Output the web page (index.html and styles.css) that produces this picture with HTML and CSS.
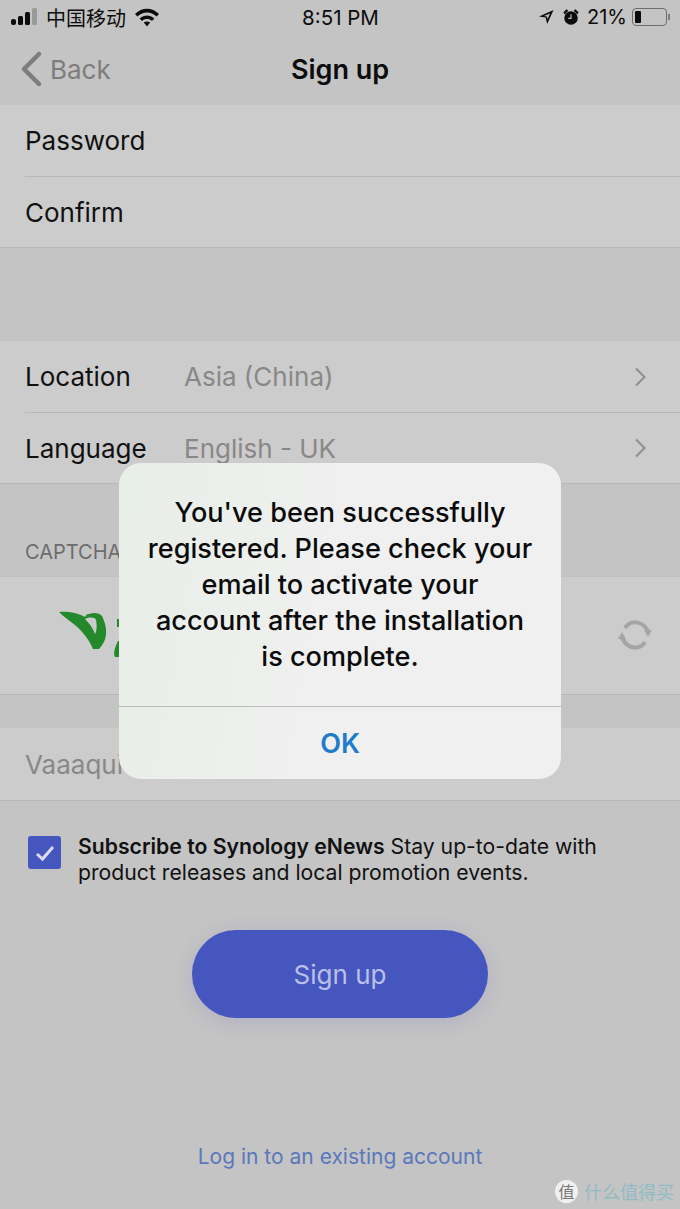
FILE: index.html
```html
<!DOCTYPE html>
<html>

<head>
    <title>Sign up</title>
    <link rel="stylesheet" href="styles.css">
</head>

<body>
    <div class="statusbar">
        <div class="status-left">
            <svg class="signal" width="28" height="20" viewBox="0 0 28 20">
                <rect x="0" y="12" width="5" height="6" rx="2" fill="#0c0c0c"/>
                <rect x="7" y="9" width="5" height="9" rx="1.5" fill="#0c0c0c"/>
                <rect x="14" y="5" width="5" height="13" rx="1.5" fill="#0c0c0c"/>
                <rect x="21" y="1" width="5" height="17" rx="1.5" fill="#9a9a9a"/>
            </svg>
            <span class="carrier">中国移动</span>
            <svg class="wifi" width="26" height="20" viewBox="0 0 26 20">
                <path d="M1 7 C8 0 18 0 25 7 L22.6 9.6 C16.6 4.2 9.4 4.2 3.4 9.6 Z" fill="#0c0c0c"/>
                <path d="M5.6 11.6 C10 7.6 16 7.6 20.4 11.6 L18 14 C14.8 11.4 11.2 11.4 8 14 Z" fill="#0c0c0c"/>
                <path d="M9.8 15.6 C11.8 14 14.2 14 16.2 15.6 L13 19.4 Z" fill="#0c0c0c"/>
            </svg>
        </div>
        <div class="status-time">8:51 PM</div>
        <div class="status-right">
            <svg width="16" height="16" viewBox="0 0 16 16">
                <path d="M15.5 1 L1 7.6 L7.6 8.4 L9.2 15 Z M12 4.4 L6 7 L8.8 7.4 L9.6 10 Z" fill="#0c0c0c" fill-rule="evenodd"/>
            </svg>
            <svg class="alarm" width="18" height="18" viewBox="0 0 20 20">
                <circle cx="10" cy="11" r="7.5" fill="#0c0c0c"/>
                <path d="M1.5 5 L5 1.5 L7 3 L3 7 Z M18.5 5 L15 1.5 L13 3 L17 7 Z" fill="#0c0c0c"/>
                <path d="M10 7 V11.5 H7" stroke="#c4c4c4" stroke-width="1.2" fill="none"/>
            </svg>
            <span class="battery-text">21%</span>
            <div class="battery">
                <div class="battery-level"></div>
            </div>
            <div class="battery-tip"></div>
        </div>
    </div>

    <div class="navbar">
        <div class="nav-back">
            <svg width="22" height="36" viewBox="0 0 22 36">
                <path d="M19 3 L4 18 L19 33" stroke="#7d7d7d" stroke-width="4.5" fill="none" stroke-linecap="round" stroke-linejoin="round"/>
            </svg>
            <span>Back</span>
        </div>
        <div class="nav-title">Sign up</div>
    </div>

    <div class="group">
        <div class="row"><span class="row-label">Password</span></div>
        <div class="row"><span class="row-label">Confirm</span></div>
    </div>

    <div class="gap-large"></div>

    <div class="group">
        <div class="row">
            <span class="row-label wide">Location</span>
            <span class="row-value">Asia (China)</span>
            <svg class="chevron" width="12" height="20" viewBox="0 0 12 20">
                <path d="M1 1.5 L9.5 10 L1 18.5" stroke="#8e8e8e" stroke-width="2" fill="none"/>
            </svg>
        </div>
        <div class="row">
            <span class="row-label wide">Language</span>
            <span class="row-value">English - UK</span>
            <svg class="chevron" width="12" height="20" viewBox="0 0 12 20">
                <path d="M1 1.5 L9.5 10 L1 18.5" stroke="#8e8e8e" stroke-width="2" fill="none"/>
            </svg>
        </div>
    </div>

    <div class="section-title">CAPTCHA</div>

    <div class="group captcha-group">
        <svg class="captcha" width="70" height="56" viewBox="0 0 70 56">
            <path d="M0 1 C10 0 16 2 22 4 L26 6 C27 4 28 3 30 3 C36 1 40 2 43 5 C48 15 50 28 40 38 L34 38 C30 28 22 18 12 11 C8 8 3 4 0 1 Z" fill="#23892a"/>
            <path d="M26 8 C30 6 36 6 37 9 C38 14 38 20 36 23 C34 17 30 12 26 8 Z" fill="#cccccc"/>
            <path d="M59 30 C56 36 54 42 56 46 L62 46 L62 30 Z M58 8 H62 V16 H58 Z" fill="#23892a"/>
        </svg>
        <svg class="refresh" width="36" height="32" viewBox="0 0 36 32">
            <path d="M8 9 C13 1 25 1 31 12" stroke="#a5a5a5" stroke-width="4" fill="none"/>
            <path d="M28 23 C23 31 11 31 5 19" stroke="#a5a5a5" stroke-width="4" fill="none"/>
            <path d="M27 11 L35 11 L31 18 Z M1 20 L9 20 L5 13 Z" fill="#a5a5a5"/>
        </svg>
    </div>

    <div class="gap-small"></div>

    <div class="group">
        <div class="row input-row"><span class="row-placeholder">Vaaaqui</span></div>
    </div>

    <div class="subscribe">
        <div class="checkbox">
            <svg width="22" height="18" viewBox="0 0 22 18">
                <path d="M3 10 L8.5 15 L19 3" stroke="#d9dcf3" stroke-width="3" fill="none"/>
            </svg>
        </div>
        <p class="subscribe-text"><b>Subscribe to Synology eNews</b> Stay up-to-date with product releases and local promotion events.</p>
    </div>

    <div class="button-wrap">
        <div class="signup-button">Sign up</div>
    </div>

    <div class="login-link">Log in to an existing account</div>

    <div class="dialog">
        <div class="dialog-message">You've been successfully registered. Please check your email to activate your account after the installation is complete.</div>
        <div class="dialog-button">OK</div>
    </div>

    <div class="watermark">
        <span class="watermark-logo">值</span>
        <span class="watermark-text">什么值得买</span>
    </div>
</body>
</html>
```

FILE: styles.css
```css
* {
    box-sizing: border-box;
}

html,
body {
    margin: 0;
    height: 1209px;
    overflow: hidden;
}

body {
    position: relative;
    background-color: #c4c4c4;
    font-family: Inter, "Noto Sans CJK SC", sans-serif;
    color: #0c0c0c;
}

.statusbar {
    height: 33px;
    display: grid;
    grid-template-columns: 1fr auto 1fr;
    align-items: center;
    padding: 1px 10px 0 11px;
    font-size: 20.5px;
}

.status-left {
    display: flex;
    align-items: center;
}

.carrier {
    margin-left: 7px;
    font-size: 20px;
    font-family: "Noto Sans CJK SC", sans-serif;
}

.wifi {
    margin-left: 8px;
}

.status-right {
    display: flex;
    align-items: center;
    justify-content: flex-end;
}

.alarm {
    margin-left: 8px;
}

.battery-text {
    margin-left: 7px;
    font-size: 20px;
}

.battery {
    width: 35px;
    height: 18px;
    margin-left: 5px;
    border: 1.5px solid #6d6d6d;
    border-radius: 4px;
    padding: 2px;
}

.battery-level {
    width: 6px;
    height: 100%;
    background-color: #0c0c0c;
    border-radius: 1px;
}

.battery-tip {
    width: 2px;
    height: 6px;
    margin-left: 1px;
    background-color: #7d7d7d;
}

.navbar {
    height: 72px;
    position: relative;
    display: flex;
    align-items: center;
    justify-content: center;
}

.nav-back {
    position: absolute;
    left: 20px;
    top: 18px;
    display: flex;
    align-items: center;
    font-size: 26px;
    color: #7d7d7d;
}

.nav-back span {
    margin-left: 8px;
}

.nav-title {
    font-size: 27px;
    font-weight: 600;
}

.group {
    background-color: #cccccc;
    border-bottom: 1px solid #b8b8b8;
}

.row {
    height: 72px;
    margin-left: 25px;
    padding-right: 33px;
    display: flex;
    align-items: center;
    font-size: 26px;
    border-bottom: 1px solid #b8b8b8;
}

.row:last-child {
    height: 70px;
    border-bottom: none;
}

.row.input-row {
    height: 72px;
}

.row-label {
    color: #111111;
}

.row-label.wide {
    width: 159px;
}

.row-value {
    flex: 1;
    color: #888888;
}

.row-placeholder {
    color: #888888;
}

.gap-large {
    height: 93px;
}

.section-title {
    height: 92px;
    padding: 56px 0 0 25px;
    font-size: 20px;
    line-height: 24px;
    color: #6c6c6c;
}

.captcha-group {
    height: 119px;
    padding: 34px 27px 0 59px;
    display: flex;
    justify-content: space-between;
    align-items: flex-start;
    border-top: 1px solid #c0c0c0;
}

.refresh {
    margin-top: 8px;
}

.gap-small {
    height: 33px;
}

.subscribe {
    display: flex;
    padding: 32px 40px 0 28px;
}

.checkbox {
    width: 33px;
    height: 33px;
    flex-shrink: 0;
    margin-top: 3px;
    background-color: #4656bf;
    border-radius: 3px;
    display: flex;
    align-items: center;
    justify-content: center;
}

.subscribe-text {
    margin: 0 0 0 17px;
    font-size: 21.2px;
    line-height: 26px;
    color: #111111;
}

.subscribe-text b {
    font-weight: 600;
}

.button-wrap {
    margin-top: 45px;
    display: flex;
    justify-content: center;
}

.signup-button {
    width: 296px;
    height: 88px;
    border-radius: 44px;
    background-color: #4656bf;
    box-shadow: 0 4px 20px rgba(80, 60, 190, 0.15);
    color: #b9c0ea;
    font-size: 26px;
    display: flex;
    align-items: center;
    justify-content: center;
}

.login-link {
    margin-top: 124px;
    text-align: center;
    font-size: 21px;
    line-height: 30px;
    color: #5a78bb;
}

.dialog {
    position: absolute;
    left: 119px;
    top: 463px;
    width: 442px;
    height: 316px;
    background: linear-gradient(100deg, #e8eee8 0%, #eff0ef 45%, #f0f0f0 100%);
    border-radius: 22px;
    display: flex;
    flex-direction: column;
}

.dialog-message {
    height: 244px;
    padding: 32px 28px 0;
    text-align: center;
    font-size: 27.1px;
    line-height: 36px;
    font-weight: 500;
    color: #0a0a0a;
    border-bottom: 1px solid #bdbdbd;
}

.dialog-button {
    flex: 1;
    display: flex;
    align-items: center;
    justify-content: center;
    font-size: 27px;
    font-weight: 600;
    color: #1f7ccb;
}

.watermark {
    position: absolute;
    left: 555px;
    top: 1178px;
    display: flex;
    align-items: center;
}

.watermark-logo {
    width: 23px;
    height: 23px;
    border-radius: 50%;
    background-color: #f0f0f0;
    color: #777777;
    font-size: 16px;
    line-height: 23px;
    text-align: center;
    font-family: "Noto Sans CJK SC", sans-serif;
}

.watermark-text {
    margin-left: 6px;
    font-size: 18px;
    color: #8fbcc4;
    font-family: "Noto Sans CJK SC", sans-serif;
}
```
